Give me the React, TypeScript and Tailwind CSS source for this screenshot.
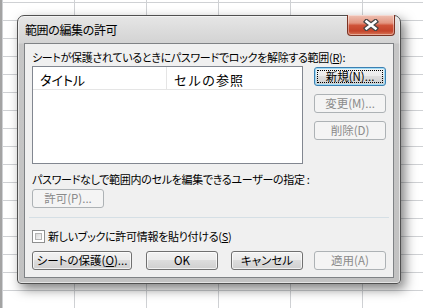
import type { ReactNode } from 'react';

type BtnProps = {
  children: ReactNode;
  disabled?: boolean;
  focused?: boolean;
  className?: string;
};

function Btn({ children, disabled, focused, className = '' }: BtnProps) {
  if (disabled) {
    return (
      <div className={`h-[19px] rounded-[3px] border border-[#adb2b5] bg-[#f4f4f4] text-[#8a8a8a] flex items-center justify-center text-[11.5px] leading-none ${className}`}>
        {children}
      </div>
    );
  }
  if (focused) {
    return (
      <div className={`h-[19px] rounded-[3px] border border-[#3c7fb1] bg-[linear-gradient(to_bottom,#f2f2f2_0%,#ebebeb_50%,#dddddd_50%,#cfcfcf_100%)] shadow-[inset_0_0_0_1px_#9fdcf7] p-[2px] ${className}`}>
        <div className="h-full border border-dotted border-black flex items-center justify-center text-[11.5px] leading-none text-black">
          {children}
        </div>
      </div>
    );
  }
  return (
    <div className={`h-[19px] rounded-[3px] border border-[#707070] bg-[linear-gradient(to_bottom,#f2f2f2_0%,#ebebeb_50%,#dddddd_50%,#cfcfcf_100%)] shadow-[inset_0_0_0_1px_rgba(255,255,255,0.7)] flex items-center justify-center text-[11.5px] leading-none text-black ${className}`}>
      {children}
    </div>
  );
}

function CloseButton() {
  return (
    <div className="-mt-px mr-[5px] h-[21px] w-[48px] rounded-b-[4px] border border-t-0 border-[#7a3323] bg-[linear-gradient(to_bottom,#efc2b4_0%,#e39580_40%,#cf5339_52%,#c4432a_80%,#d97858_100%)] shadow-[inset_0_0_0_1px_rgba(255,255,255,0.4)] flex items-center justify-center">
      <svg width="16" height="12" viewBox="0 0 16 12">
        <path d="M3.5 2.5 L12.5 9.5 M12.5 2.5 L3.5 9.5" stroke="#454545" strokeWidth="5" strokeLinecap="square" />
        <path d="M3.5 2.5 L12.5 9.5 M12.5 2.5 L3.5 9.5" stroke="#ffffff" strokeWidth="2.6" strokeLinecap="square" />
      </svg>
    </div>
  );
}

export default function App() {
  return (
    <div className="w-[423px] h-[308px] overflow-hidden bg-white [background-image:linear-gradient(to_right,#cfd1d4_1px,transparent_1px),linear-gradient(to_bottom,#cfd1d4_1px,transparent_1px)] [background-size:72px_18px] [background-position:0_2px] border-l-2 border-[#a3a3a3] pt-[15px] pl-[15px] font-['Noto_Sans_CJK_JP',sans-serif] text-black">
      {/* dialog window */}
      <div className="w-[384px] h-[269px] flex flex-col rounded-t-[7px] rounded-b-[4px] border border-[#505050] bg-[linear-gradient(to_bottom,#e6e6e6_0px,#d3d3d3_27px,#c6c6c6_28px,#c2c2c2_100%)] shadow-[inset_0_0_0_1px_rgba(255,255,255,0.55),4px_5px_12px_rgba(0,0,0,0.5)]">
        <div className="h-[27px] flex justify-between">
          <span className="self-center pl-[7px] text-[12px] leading-[14px] tracking-[-0.5px]">範囲の編集の許可</span>
          <CloseButton />
        </div>

        <div className="mx-[6px] h-[235px] border border-[#7f8285] bg-[#f0f0f0] flex flex-col pl-[7px] text-[11px] tracking-[-0.3px] [font-feature-settings:'palt']">
          <p className="mt-[6px] leading-[14px]">
            シートが保護されているときにパスワードでロックを解除する範囲(<span className="underline">R</span>):
          </p>

          <div className="mt-[2px] flex">
            <div className="w-[271px] h-[98px] border border-[#828790] bg-white">
              <div className="h-[23px] flex border-b border-[#e5e5e5] text-[13px] leading-[16px] tracking-normal">
                <div className="w-[134px] border-r border-[#e5e5e5] pl-[7px] pt-[5px]">タイトル</div>
                <div className="pl-[7px] pt-[5px] [font-feature-settings:normal] tracking-[1px]">セルの参照</div>
              </div>
            </div>
            <div className="ml-[11px] pt-[1px] flex flex-col gap-[8px] tracking-normal">
              <Btn focused className="w-[72px]">新規(N)...</Btn>
              <Btn disabled className="w-[72px]">変更(M)...</Btn>
              <Btn disabled className="w-[72px]">削除(D)</Btn>
            </div>
          </div>

          <p className="mt-[8px] leading-[14px]">パスワードなしで範囲内のセルを編集できるユーザーの指定 :</p>
          <Btn disabled className="mt-[3px] w-[72px] tracking-normal">許可(P)...</Btn>

          <div className="mt-[9px] -ml-[3px] mr-[4px] h-px bg-[#d5dfe5]" />

          <div className="mt-[11px] flex items-center gap-[3px]">
            <div className="w-[13px] h-[13px] border border-[#8e8f8f] bg-white p-[2px]">
              <div className="w-full h-full border border-[#b4b4b4] bg-[linear-gradient(135deg,#d8d8d8,#f6f6f6)]" />
            </div>
            <span className="leading-[14px]">
              新しいブックに許可情報を貼り付ける(<span className="underline">S</span>)
            </span>
          </div>

          <div className="mt-auto mb-[7px] flex tracking-normal">
            <Btn className="w-[100px]">
              <span>シートの保護(<span className="underline">O</span>)...</span>
            </Btn>
            <Btn className="ml-[14px] w-[72px]">OK</Btn>
            <Btn className="ml-[13px] w-[72px]">キャンセル</Btn>
            <Btn disabled className="ml-[11px] w-[72px]">適用(A)</Btn>
          </div>
        </div>
      </div>
    </div>
  );
}
